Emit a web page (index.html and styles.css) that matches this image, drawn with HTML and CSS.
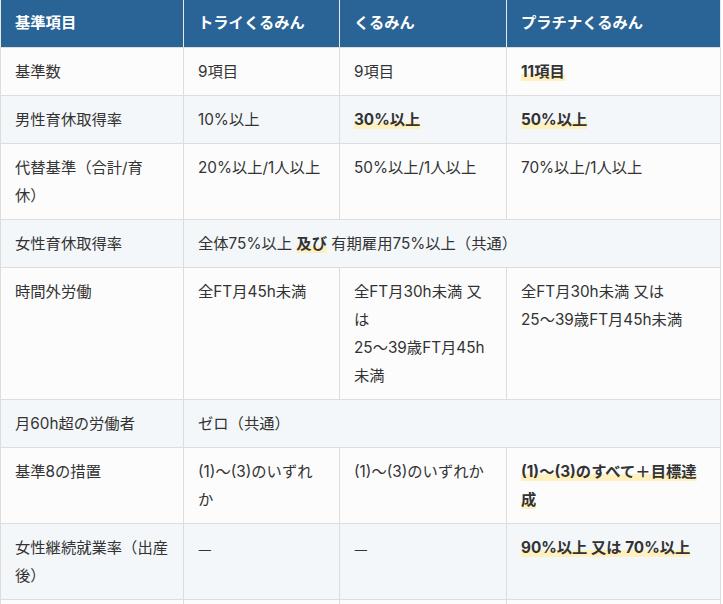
FILE: index.html
```html
<!DOCTYPE html>
<html lang="ja">
<head>
<meta charset="utf-8">
<title>くるみん比較</title>
<link rel="stylesheet" href="styles.css">
</head>
<body>
<div class="wrap">
<table class="cmp">
  <colgroup>
    <col class="c1"><col class="c2"><col class="c3"><col class="c4">
  </colgroup>
  <thead>
    <tr><th>基準項目</th><th>トライくるみん</th><th>くるみん</th><th>プラチナくるみん</th></tr>
  </thead>
  <tbody>
    <tr><td>基準数</td><td>9項目</td><td>9項目</td><td><strong class="mk">11項目</strong></td></tr>
    <tr><td>男性育休取得率</td><td>10%以上</td><td><strong class="mk">30%以上</strong></td><td><strong class="mk">50%以上</strong></td></tr>
    <tr><td>代替基準（合計/育休）</td><td>20%以上/1人以上</td><td>50%以上/1人以上</td><td>70%以上/1人以上</td></tr>
    <tr><td>女性育休取得率</td><td colspan="3">全体75%以上 <strong class="mk">及び</strong> 有期雇用75%以上（共通）</td></tr>
    <tr><td>時間外労働</td><td>全FT月45h未満</td><td>全FT月30h未満 又は<br>25〜39歳FT月45h未満</td><td>全FT月30h未満 又は<br>25〜39歳FT月45h未満</td></tr>
    <tr><td>月60h超の労働者</td><td colspan="3">ゼロ（共通）</td></tr>
    <tr><td>基準8の措置</td><td>(1)〜(3)のいずれか</td><td>(1)〜(3)のいずれか</td><td><strong class="mk">(1)〜(3)のすべて＋目標達成</strong></td></tr>
    <tr><td>女性継続就業率（出産後）</td><td><span class="dash">—</span></td><td><span class="dash">—</span></td><td><strong class="mk">90%以上 又は 70%以上</strong></td></tr>
    <tr><td>&nbsp;</td><td>&nbsp;</td><td>&nbsp;</td><td>&nbsp;</td></tr>
  </tbody>
</table>
</div>
</body>
</html>
```

FILE: styles.css
```css
html, body {
  margin: 0;
  padding: 0;
  background: #ffffff;
}
body {
  font-family: Inter, "Noto Sans CJK JP", sans-serif;
  color: #333333;
}
.wrap {
  width: 723px;
  overflow: hidden;
}
.cmp {
  width: 720px;
  border-collapse: collapse;
  table-layout: fixed;
  font-size: 15.3px;
  line-height: 28px;
  text-spacing-trim: space-all;
}
.c1 { width: 183px; }
.c2 { width: 156px; }
.c3 { width: 167px; }
.c4 { width: 214px; }
.cmp th {
  background: #2a6496;
  color: #ffffff;
  font-weight: 700;
  text-align: left;
  padding: 9px 15px 10px 14px;
  border: 1px solid #dddddd;
  border-top: none;
  border-left: 1px solid #e8e8e8;
  border-right: 1px solid #e8e8e8;
}
.cmp td {
  padding: 10px 15px 9px 14px;
  vertical-align: top;
  border: 1px solid #dddddd;
  background: #fcfcfc;
}
.cmp tbody tr:nth-child(even) td {
  background: #f4f7fa;
}
.dash {
  font-family: "Noto Sans CJK JP", sans-serif;
}
.mk {
  font-weight: 700;
  color: #333333;
  background: linear-gradient(transparent 62%, #fff0bf 62%);
}
```
